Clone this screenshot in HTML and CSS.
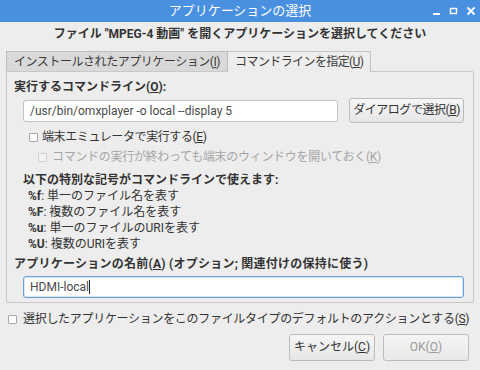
FILE: index.html
```html
<!DOCTYPE html>
<html lang="ja">

<head>
    <meta charset="UTF-8">
    <title>アプリケーションの選択</title>
    <link rel="stylesheet" href="styles.css">
</head>

<body>
    <div class="window">
        <div class="titlebar">
            <span></span>
            <span class="title">アプリケーションの選択</span>
            <div class="controls">
                <svg width="10" height="10" viewBox="0 0 10 10"><rect x="1" y="7" width="7" height="2" fill="#fff"/></svg>
                <svg width="10" height="10" viewBox="0 0 10 10"><rect x="1.5" y="2.5" width="6" height="5" fill="none" stroke="#fff" stroke-width="1.4"/></svg>
                <svg width="10" height="10" viewBox="0 0 10 10"><path d="M1.5 1.5 L8.5 8.5 M8.5 1.5 L1.5 8.5" stroke="#fff" stroke-width="1.8"/></svg>
            </div>
        </div>

        <div class="content">
            <p class="heading">ファイル "MPEG-4 動画" を開くアプリケーションを選択してください</p>

            <ul class="tabs">
                <li class="tab">インストールされたアプリケーション(<u>I</u>)</li>
                <li class="tab active">コマンドラインを指定(<u>U</u>)</li>
            </ul>

            <div class="panel">
                <p class="label">実行するコマンドライン(<u>O</u>):</p>
                <div class="cmd-row">
                    <div class="entry cmd">/usr/bin/omxplayer -o local --display 5</div>
                    <span class="button browse">ダイアログで選択(<u>B</u>)</span>
                </div>
                <label class="check term"><span class="box"></span>端末エミュレータで実行する(<u>E</u>)</label>
                <label class="check keep disabled"><span class="box"></span>コマンドの実行が終わっても端末のウィンドウを開いておく(<u>K</u>)</label>

                <p class="label symbols-title">以下の特別な記号がコマンドラインで使えます:</p>
                <ul class="symbols">
                    <li><b>%f</b>: 単一のファイル名を表す</li>
                    <li><b>%F</b>: 複数のファイル名を表す</li>
                    <li><b>%u</b>: 単一のファイルのURIを表す</li>
                    <li><b>%U</b>: 複数のURIを表す</li>
                </ul>

                <p class="label name-label">アプリケーションの名前(<u>A</u>) (オプション; 関連付けの保持に使う)</p>
                <div class="entry name focus">HDMI-local<span class="caret"></span></div>
            </div>

            <label class="check default"><span class="box"></span>選択したアプリケーションをこのファイルタイプのデフォルトのアクションとする(<u>S</u>)</label>

            <div class="actions">
                <span class="button">キャンセル(<u>C</u>)</span>
                <span class="button ok">OK(<u>O</u>)</span>
            </div>
        </div>
    </div>
</body>

</html>
```

FILE: styles.css
```css
* {
    margin: 0;
    padding: 0;
    box-sizing: border-box;
}

li {
    list-style: none;
}

u {
    text-decoration: underline;
    text-underline-offset: 1px;
}

body {
    width: 480px;
    height: 370px;
    background: #ededed;
    font-family: Roboto, "Noto Sans CJK JP", sans-serif;
    font-size: 12px;
    color: #333;
    overflow: hidden;
}

.window {
    height: 370px;
    background: #ededed;
}

.titlebar {
    height: 22px;
    background: #4a90e0;
    display: grid;
    grid-template-columns: 1fr auto 1fr;
    align-items: center;
    color: #fff;
    font-size: 13px;
}

.title {
    line-height: 22px;
}

.controls {
    justify-self: end;
    display: flex;
    gap: 7px;
    padding-right: 4px;
}

.content {
    padding: 0 6px;
}

.heading {
    padding-top: 4px;
    line-height: 16px;
    text-align: center;
    font-weight: bold;
    margin-bottom: 9px;
    white-space: nowrap;
}

.tabs {
    display: flex;
    height: 20px;
    position: relative;
    z-index: 1;
    white-space: nowrap;
}

.tab {
    height: 20px;
    line-height: 20px;
    padding: 0 7px;
    background: #d9d9d9;
    border: 1px solid #bdbdbd;
    border-bottom: none;
    color: #3a3a3a;
    letter-spacing: -0.45px;
}

.tab.active {
    height: 21px;
    background: #ededed;
    border-color: #c4c4c4;
    border-left: none;
    padding: 0 7px;
    letter-spacing: -0.6px;
}

.panel {
    border: 1px solid #c8c8c8;
    padding: 7px 9px 4px 7px;
    border-radius: 0 2px 2px 2px;
}

.label {
    line-height: 16px;
    font-weight: bold;
    white-space: nowrap;
}

.cmd-row {
    display: flex;
    align-items: center;
    gap: 11px;
    margin: 3px 0 0 9px;
}

.entry {
    height: 22px;
    line-height: 20px;
    background: #fff;
    border: 1px solid #c2c2c2;
    border-radius: 3px;
    padding: 0 6px;
    color: #4a4a4a;
}

.cmd {
    flex: 1;
}

.button {
    display: inline-block;
    height: 25px;
    line-height: 23px;
    padding: 0 4px;
    border: 1px solid #bcbcbc;
    border-radius: 3px;
    background: linear-gradient(#f6f6f6, #e6e6e6);
    color: #333;
    text-align: center;
    white-space: nowrap;
}

.browse {
    padding: 0 3px;
    letter-spacing: -0.45px;
}

.check {
    display: flex;
    align-items: center;
    line-height: 16px;
    white-space: nowrap;
}

.box {
    flex-shrink: 0;
    width: 9px;
    height: 9px;
    border: 1px solid #a8a8a8;
    background: #fff;
    border-radius: 1px;
    margin-right: 5px;
}

.term {
    margin: 6px 0 0 15px;
    letter-spacing: -0.4px;
}

.term .box {
    margin-right: 4px;
}

.keep {
    margin: 4px 0 0 24px;
    letter-spacing: -0.3px;
}

.disabled {
    color: #a5a5a5;
}

.disabled .box {
    border-color: #d0d0d0;
    background: #f3f3f3;
}

.symbols-title {
    margin: 7px 0 0 9px;
}

.symbols {
    margin-left: 14px;
}

.symbols li {
    line-height: 16px;
}

.name-label {
    margin-top: 4px;
    letter-spacing: 0.25px;
}

.name {
    margin: 4px 0 0 9px;
    border-color: #6b9fd8;
    box-shadow: inset 0 0 0 1px rgba(107, 159, 216, 0.25);
}

.caret {
    display: inline-block;
    width: 1px;
    height: 14px;
    background: #222;
    vertical-align: -3px;
}

.default {
    margin: 8px 0 0 2px;
    letter-spacing: -0.3px;
}

.default .box {
    margin-right: 6px;
}

.actions {
    display: flex;
    justify-content: flex-end;
    gap: 8px;
    margin: 7px 5px 0 0;
}

.actions .button {
    width: 86px;
    height: 27px;
    line-height: 25px;
}

.ok {
    color: #9a9a9a;
    background: linear-gradient(#f4f4f4, #e9e9e9);
}
```
